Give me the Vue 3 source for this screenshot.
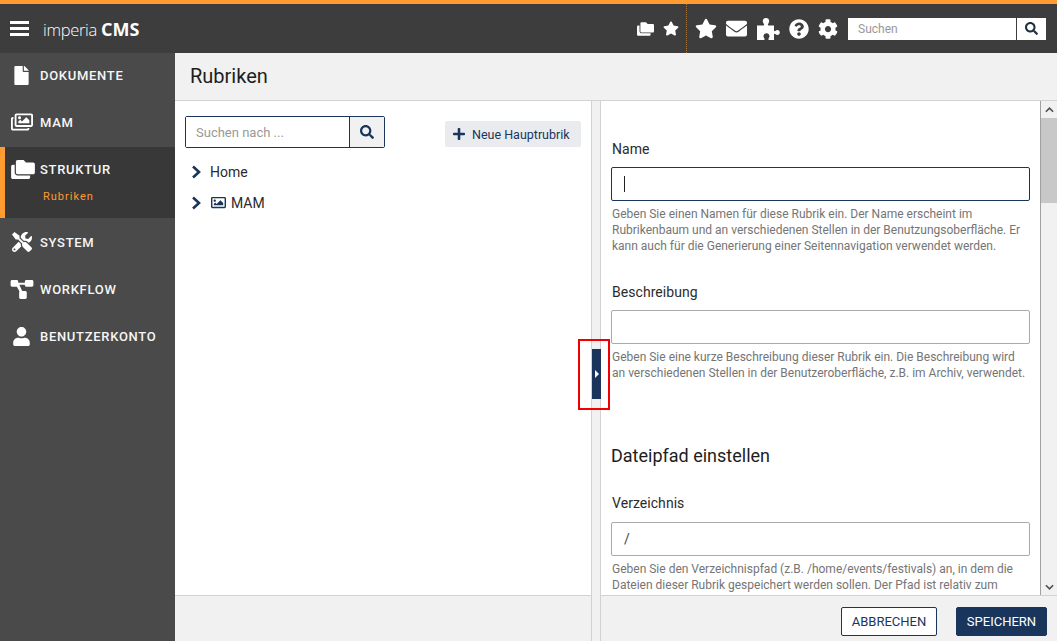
<script setup>
const icons = {
  star: { box: '0 0 576 512', d: 'M259.3 17.8L194 150.2 47.9 171.5c-26.2 3.8-36.7 36.1-17.7 54.6l105.7 103-25 145.5c-4.5 26.3 23.2 46 46.4 33.7L288 439.6l130.7 68.7c23.2 12.2 50.9-7.4 46.4-33.7l-25-145.5 105.7-103c19-18.5 8.5-50.8-17.7-54.6L382 150.2 316.7 17.8c-11.7-23.6-45.6-23.9-57.4 0z' },
  envelope: { box: '0 0 512 512', d: 'M502.3 190.8c3.9-3.1 9.7-.2 9.7 4.7V400c0 26.5-21.5 48-48 48H48c-26.5 0-48-21.5-48-48V195.6c0-5 5.7-7.8 9.7-4.7 22.4 17.4 52.1 39.5 154.1 113.6 21.1 15.4 56.7 47.8 92.2 47.6 35.7.3 72-32.8 92.3-47.6 102-74.1 131.6-96.3 154-113.7zM256 320c23.2.4 56.6-29.2 73.4-41.4 132.7-96.3 142.8-104.7 173.4-128.7 5.8-4.5 9.2-11.5 9.2-18.9v-19c0-26.5-21.5-48-48-48H48C21.5 64 0 85.5 0 112v19c0 7.4 3.4 14.3 9.2 18.9 30.6 23.9 40.7 32.4 173.4 128.7 16.8 12.2 50.2 41.8 73.4 41.4z' },
  puzzle: { box: '0 0 24 24', d: 'M1 8.5h6.2c.9 0 1.2-.6.8-1.3C7.3 6 6.8 5.2 6.8 4 6.8 2.200 8.200 1 10 1s3.200 1.200 3.200 3c0 1.200-.5 2-1.200 3.200-.4.7-.1 1.300.8 1.300H18v4.700c0 .9.600 1.200 1.300.8.8-.5 1.400-.9 2.200-.9 1.300 0 2.300 1 2.300 2.400s-1 2.400-2.300 2.400c-.8 0-1.400-.4-2.200-.9-.7-.4-1.300-.1-1.300.8V23h-4.700c-.9 0-1.200-.6-.8-1.300.5-.9 1-1.600 1-2.700 0-1.700-1.300-2.800-3-2.800s-3 1.100-3 2.800c0 1.100.5 1.800 1 2.700.4.700.1 1.300-.8 1.300H1z' },
  question: { box: '0 0 512 512', d: 'M504 256c0 136.997-111.043 248-248 248S8 392.997 8 256C8 119.083 119.043 8 256 8s248 111.083 248 248zM262.655 90c-54.497 0-89.255 22.957-116.549 63.758-3.536 5.286-2.353 12.415 2.715 16.258l34.699 26.31c5.205 3.947 12.621 3.008 16.665-2.122 17.864-22.658 30.113-35.797 57.303-35.797 20.429 0 45.698 13.148 45.698 32.958 0 14.976-12.363 22.667-32.534 33.976C247.128 238.528 216 254.941 216 296v4c0 6.627 5.373 12 12 12h56c6.627 0 12-5.373 12-12v-1.333c0-28.462 83.186-29.647 83.186-106.667 0-58.002-60.165-102-116.531-102zM256 338c-25.365 0-46 20.635-46 46 0 25.364 20.635 46 46 46s46-20.636 46-46c0-25.365-20.635-46-46-46z' },
  cog: { box: '0 0 512 512', d: 'M487.4 315.7l-42.6-24.6c4.3-23.2 4.3-47 0-70.2l42.6-24.6c4.9-2.8 7.1-8.6 5.5-14-11.1-35.6-30-67.8-54.7-94.6-3.8-4.1-10-5.1-14.8-2.3L380.8 110c-17.9-15.4-38.5-27.3-60.8-35.1V25.8c0-5.6-3.9-10.5-9.4-11.7-36.7-8.2-74.3-7.8-109.2 0-5.5 1.2-9.4 6.1-9.4 11.7V75c-22.2 7.9-42.8 19.8-60.8 35.1L88.7 85.5c-4.9-2.8-11-1.9-14.8 2.3-24.7 26.7-43.6 58.9-54.7 94.6-1.7 5.4.6 11.2 5.5 14L67.3 221c-4.3 23.2-4.3 47 0 70.2l-42.6 24.6c-4.9 2.8-7.1 8.6-5.5 14 11.1 35.6 30 67.8 54.7 94.6 3.8 4.1 10 5.1 14.8 2.3l42.6-24.6c17.9 15.4 38.5 27.3 60.8 35.1v49.2c0 5.6 3.9 10.5 9.4 11.7 36.7 8.2 74.3 7.8 109.2 0 5.5-1.2 9.4-6.1 9.4-11.7v-49.2c22.2-7.9 42.8-19.8 60.8-35.1l42.6 24.6c4.9 2.8 11 1.9 14.8-2.3 24.7-26.7 43.6-58.9 54.7-94.6 1.5-5.5-.7-11.3-5.6-14.1zM256 336c-44.1 0-80-35.9-80-80s35.9-80 80-80 80 35.9 80 80-35.9 80-80 80z' },
  search: { box: '0 0 512 512', d: 'M505 442.7L405.3 343c-4.5-4.5-10.6-7-17-7H372c27.6-35.3 44-79.7 44-128C416 93.1 322.9 0 208 0S0 93.1 0 208s93.1 208 208 208c48.3 0 92.7-16.4 128-44v16.3c0 6.4 2.5 12.5 7 17l99.7 99.7c9.4 9.4 24.6 9.4 33.9 0l28.3-28.3c9.4-9.4 9.4-24.6.1-34zM208 336c-70.7 0-128-57.2-128-128 0-70.7 57.2-128 128-128 70.7 0 128 57.2 128 128 0 70.7-57.2 128-128 128z' },
  user: { box: '0 0 448 512', d: 'M224 256c70.7 0 128-57.3 128-128S294.7 0 224 0 96 57.3 96 128s57.3 128 128 128zm89.6 32h-16.7c-22.2 10.2-46.9 16-72.9 16s-50.6-5.8-72.9-16h-16.7C60.2 288 0 348.2 0 422.4V464c0 26.5 21.5 48 48 48h352c26.500 0 48-21.500 48-48v-41.600c0-74.200-60.200-134.400-134.400-134.400z' },
  file: { box: '0 0 384 512', d: 'M224 136V0H24C10.700 0 0 10.700 0 24v464c0 13.300 10.700 24 24 24h336c13.300 0 24-10.700 24-24V160H248c-13.200 0-24-10.800-24-24zm160-14.100v6.100H256V0h6.100c6.400 0 12.500 2.500 17 7l97.900 98c4.500 4.500 7 10.600 7 16.900z' },
  images: { box: '0 0 576 512', d: 'M480 416v16c0 26.510-21.490 48-48 48H48c-26.510 0-48-21.490-48-48V176c0-26.510 21.490-48 48-48h16v48H54a6 6 0 0 0-6 6v244a6 6 0 0 0 6 6h372a6 6 0 0 0 6-6v-10h48zm42-336H150a6 6 0 0 0-6 6v244a6 6 0 0 0 6 6h372a6 6 0 0 0 6-6V86a6 6 0 0 0-6-6zm6-48c26.510 0 48 21.490 48 48v256c0 26.510-21.490 48-48 48H144c-26.510 0-48-21.490-48-48V80c0-26.510 21.490-48 48-48h384zM264 144c0 22.091-17.909 40-40 40s-40-17.909-40-40 17.909-40 40-40 40 17.909 40 40zm-72 96l39.515-39.515c4.686-4.686 12.284-4.686 16.971 0L288 240l103.515-103.515c4.686-4.686 12.284-4.686 16.971 0L480 208v80H192v-48z' },
  folders: { box: '0 0 640 512', d: 'M96 336V128H48c-26.500 0-48 21.500-48 48v288c0 26.500 21.500 48 48 48h416c26.500 0 48-21.500 48-48v-48H176c-44.100 0-80-35.900-80-80zM592 64H400L336 0H176c-26.500 0-48 21.500-48 48v288c0 26.500 21.500 48 48 48h416c26.500 0 48-21.500 48-48V112c0-26.500-21.500-48-48-48z' },
  tools: { box: '0 0 512 512', d: 'M501.100 395.700L384 278.600c-23.100-23.100-57.600-27.600-85.400-13.900L192 158.100V96L64 0 0 64l96 128h62.100l106.600 106.600c-13.600 27.800-9.200 62.300 13.900 85.400l117.100 117.100c14.600 14.600 38.200 14.600 52.700 0l52.700-52.700c14.500-14.600 14.500-38.200 0-52.700zM331.700 225c28.300 0 54.900 11 74.900 31l19.400 19.400c15.800-6.900 30.800-16.500 43.800-29.500 37.100-37.100 49.700-89.300 37.900-136.700-2.200-9-13.500-12.100-20.100-5.500l-74.400 74.400-67.900-11.300L334 98.900l74.400-74.400c6.600-6.600 3.400-17.900-5.700-20.200-47.400-11.700-99.600.9-136.600 37.900-28.500 28.500-41.900 66.100-41.200 103.600l82.100 82.100c8.100-1.900 16.500-2.900 24.700-2.900zm-103.900 82l-56.700-56.700L18.700 402.800c-25 25-25 65.500 0 90.500s65.500 25 90.500 0l123.600-123.600c-7.600-19.900-9.900-41.600-5-62.700zM64 472c-13.200 0-24-10.800-24-24 0-13.300 10.700-24 24-24s24 10.700 24 24c0 13.200-10.700 24-24 24z' },
  workflow: { box: '0 0 24 20', d: 'M0 1.500C0 .7.700 0 1.500 0h5C7.300 0 8 .7 8 1.500V3h7V1.500c0-.8.700-1.500 1.500-1.500h6c.8 0 1.500.7 1.500 1.500v4c0 .8-.7 1.500-1.500 1.500h-6c-.8 0-1.500-.7-1.500-1.500V5H9.200l3 6.500h3.300c.8 0 1.500.7 1.500 1.500v5.500c0 .8-.7 1.500-1.500 1.500h-5C9.700 20 9 19.300 9 18.500V13c0-.4.200-.8.400-1L6.600 7H1.500C.7 7 0 6.300 0 5.500z' },
  image: { box: '0 0 512 512', d: 'M464 64H48C21.490 64 0 85.490 0 112v288c0 26.510 21.490 48 48 48h416c26.510 0 48-21.490 48-48V112c0-26.510-21.490-48-48-48zm-6 336H54a6 6 0 0 1-6-6V118a6 6 0 0 1 6-6h404a6 6 0 0 1 6 6v276a6 6 0 0 1-6 6zM128 152c-22.091 0-40 17.909-40 40s17.909 40 40 40 40-17.909 40-40-17.909-40-40-40zM96 352h320v-80l-87.515-87.515c-4.686-4.686-12.284-4.686-16.971 0L192 304l-39.515-39.515c-4.686-4.686-12.284-4.686-16.971 0L96 304v48z' },
  plus: { box: '0 0 448 512', d: 'M416 208H272V64c0-17.670-14.330-32-32-32h-32c-17.670 0-32 14.330-32 32v144H32c-17.670 0-32 14.330-32 32v32c0 17.670 14.330 32 32 32h144v144c0 17.670 14.330 32 32 32h32c17.670 0 32-14.330 32-32V304h144c17.670 0 32-14.330 32-32v-32c0-17.670-14.330-32-32-32z' }
}

const menu = [
  { label: 'Dokumente', icon: 'file', w: 17, h: 19 },
  { label: 'MAM', icon: 'images', w: 22, h: 20 },
  { label: 'Struktur', icon: 'folders', w: 24, h: 19, active: true, sub: 'Rubriken' },
  { label: 'System', icon: 'tools', w: 20, h: 20 },
  { label: 'Workflow', icon: 'workflow', w: 24, h: 19 },
  { label: 'Benutzerkonto', icon: 'user', w: 17, h: 19 }
]

const topIcons = [
  { icon: 'star', w: 22, h: 21 },
  { icon: 'envelope', w: 21, h: 21 },
  { icon: 'puzzle', w: 24, h: 24 },
  { icon: 'question', w: 20, h: 20 },
  { icon: 'cog', w: 20, h: 20 }
]

const tree = [
  { label: 'Home' },
  { label: 'MAM', icon: true }
]
</script>

<template>
  <div class="app">
    <header class="topbar">
      <div class="brand">
        <div class="burger"><i></i><i></i><i></i></div>
        <span class="logo">imperia <b>CMS</b></span>
      </div>
      <div class="tools">
        <div class="quick">
          <svg class="qf" :viewBox="icons.folders.box"><path :d="icons.folders.d" /></svg>
          <svg class="qs" :viewBox="icons.star.box"><path :d="icons.star.d" /></svg>
        </div>
        <div class="main-icons">
          <svg v-for="t in topIcons" :key="t.icon" :viewBox="icons[t.icon].box" :width="t.w" :height="t.h"><path :d="icons[t.icon].d" /></svg>
        </div>
        <div class="top-search">
          <input type="text" placeholder="Suchen" />
          <button type="button">
            <svg :viewBox="icons.search.box"><path :d="icons.search.d" /></svg>
          </button>
        </div>
      </div>
    </header>

    <div class="body">
      <nav class="sidebar">
        <div v-for="m in menu" :key="m.label" class="item" :class="{ active: m.active }">
          <div class="item-row">
            <span class="item-icon">
              <svg :viewBox="icons[m.icon].box" :width="m.w" :height="m.h"><path :d="icons[m.icon].d" /></svg>
            </span>
            <span class="item-label">{{ m.label }}</span>
          </div>
          <div v-if="m.sub" class="item-sub">{{ m.sub }}</div>
        </div>
      </nav>

      <main class="content">
        <div class="title-bar"><h1>Rubriken</h1></div>
        <div class="panes">
          <section class="left">
            <div class="left-main">
              <div class="left-top">
                <div class="tree-search">
                  <input type="text" placeholder="Suchen nach ..." />
                  <button type="button">
                    <svg :viewBox="icons.search.box"><path :d="icons.search.d" /></svg>
                  </button>
                </div>
                <button type="button" class="add-btn">
                  <svg :viewBox="icons.plus.box"><path :d="icons.plus.d" /></svg>
                  Neue Hauptrubrik
                </button>
              </div>
              <ul class="tree">
                <li v-for="n in tree" :key="n.label">
                  <svg class="chev" viewBox="0 0 10 14"><polyline points="2,1.500 8,7 2,12.500" /></svg>
                  <svg v-if="n.icon" class="node-icon" :viewBox="icons.image.box"><path :d="icons.image.d" /></svg>
                  <span>{{ n.label }}</span>
                </li>
              </ul>
            </div>
            <div class="left-foot"></div>
          </section>

          <div class="splitter">
            <div class="handle"><i></i></div>
            <div class="marker"></div>
          </div>

          <section class="right">
            <div class="right-scroll">
              <form class="form" @submit.prevent>
                <label>Name</label>
                <div class="fake-input"><span class="caret"></span></div>
                <p class="help">Geben Sie einen Namen für diese Rubrik ein. Der Name erscheint im Rubrikenbaum und an verschiedenen Stellen in der Benutzungsoberfläche. Er kann auch für die Generierung einer Seitennavigation verwendet werden.</p>

                <label>Beschreibung</label>
                <input type="text" class="plain" />
                <p class="help">Geben Sie eine kurze Beschreibung dieser Rubrik ein. Die Beschreibung wird an verschiedenen Stellen in der Benutzeroberfläche, z.B. im Archiv, verwendet.</p>

                <h2>Dateipfad einstellen</h2>

                <label class="path">Verzeichnis</label>
                <input type="text" class="plain" value="/" />
                <p class="help">Geben Sie den Verzeichnispfad (z.B. /home/events/festivals) an, in dem die Dateien dieser Rubrik gespeichert werden sollen. Der Pfad ist relativ zum</p>
              </form>
              <div class="scrollbar">
                <div class="arrow"><svg viewBox="0 0 10 6"><polyline points="1,5 5,1 9,5" /></svg></div>
                <div class="track"><div class="thumb"></div></div>
                <div class="arrow"><svg viewBox="0 0 10 6"><polyline points="1,1 5,5 9,1" /></svg></div>
              </div>
            </div>
            <div class="right-foot">
              <button type="button" class="cancel">ABBRECHEN</button>
              <button type="button" class="save">SPEICHERN</button>
            </div>
          </section>
        </div>
      </main>
    </div>
  </div>
</template>

<style>
html, body {
  margin: 0;
  height: 100%;
  overflow: hidden;
}
</style>

<style scoped>
.app {
  height: 641px;
  display: flex;
  flex-direction: column;
  font-family: Roboto, "Liberation Sans", sans-serif;
  color: #222;
}
svg {
  display: block;
  fill: currentColor;
}
button, input {
  font-family: inherit;
  box-sizing: border-box;
}

.topbar {
  height: 53px;
  flex: none;
  box-sizing: border-box;
  border-top: 4px solid #ff9b31;
  background: #3d3d3d;
  display: flex;
  justify-content: space-between;
  align-items: center;
  color: #fff;
}
.brand {
  display: flex;
  align-items: center;
  padding-left: 10px;
}
.burger {
  width: 19px;
  display: flex;
  flex-direction: column;
  gap: 3px;
}
.burger i {
  display: block;
  height: 3px;
  background: #fff;
}
.logo {
  margin-left: 14px;
  font-family: "Open Sans", sans-serif;
  font-size: 16.500px;
  font-weight: 300;
  letter-spacing: -0.3px;
  color: #fff;
}
.logo b {
  font-weight: 700;
  font-size: 18px;
  letter-spacing: 0;
  color: #fff;
}
.tools {
  display: flex;
  align-items: center;
  height: 100%;
  padding-right: 11px;
}
.quick {
  display: flex;
  align-items: center;
  gap: 9px;
  height: 100%;
  padding-right: 7px;
  border-right: 1px dotted #a87a45;
}
.qf {
  width: 17px;
  height: 14px;
}
.qs {
  width: 16px;
  height: 15px;
}
.main-icons {
  display: flex;
  align-items: center;
  gap: 9px;
  margin-left: 8px;
}
.top-search {
  display: flex;
  margin-left: 10px;
  height: 22px;
}
.top-search input {
  width: 168px;
  height: 22px;
  border: 0;
  padding: 0 10px;
  font-size: 12px;
  background: #fff;
  outline: none;
}
.top-search input::placeholder {
  color: #999;
}
.top-search button {
  width: 29px;
  height: 22px;
  margin-left: 1px;
  border: 0;
  padding: 0;
  background: #fff;
  color: #1f2f40;
  display: flex;
  align-items: center;
  justify-content: center;
}
.top-search svg {
  width: 13px;
  height: 13px;
}

.body {
  flex: 1;
  min-height: 0;
  display: flex;
}
.sidebar {
  width: 175px;
  flex: none;
  background: #4a4a4a;
  color: #fff;
}
.item {
  height: 47px;
  box-sizing: border-box;
  padding-top: 11px;
}
.item.active {
  height: 71px;
  margin-bottom: 2px;
  background: #383838;
  border-left: 5px solid #ff9b31;
}
.item-row {
  display: flex;
  align-items: center;
  height: 22px;
}
.item-icon {
  width: 40px;
  flex: none;
  display: flex;
  justify-content: center;
  padding-left: 3px;
  box-sizing: border-box;
}
.active .item-icon {
  width: 35px;
  padding-left: 0;
}
.item-label {
  font-size: 13px;
  font-weight: 500;
  letter-spacing: 0.700px;
  text-transform: uppercase;
  color: #f6f6f6;
}
.item-sub {
  margin: 10px 0 0 38px;
  font-size: 11px;
  font-weight: 400;
  letter-spacing: 1px;
  color: #ff9b31;
}

.content {
  flex: 1;
  min-width: 0;
  display: flex;
  flex-direction: column;
}
.title-bar {
  height: 48px;
  flex: none;
  box-sizing: border-box;
  background: #f1f1f1;
  border-bottom: 1px solid #d2d2d2;
  padding-left: 15px;
  display: flex;
  align-items: center;
}
h1 {
  margin: 0 0 1px;
  font-size: 20px;
  font-weight: 400;
  color: #1d1d1d;
}
.panes {
  flex: 1;
  min-height: 0;
  display: flex;
}
.left {
  width: 416px;
  flex: none;
  display: flex;
  flex-direction: column;
}
.left-main {
  flex: 1;
}
.left-top {
  display: flex;
  justify-content: space-between;
  align-items: flex-start;
  padding: 15px 10px 0;
}
.tree-search {
  display: flex;
  width: 200px;
  height: 32px;
  box-sizing: border-box;
  border: 1px solid #1a355b;
  border-radius: 2px;
}
.tree-search input {
  flex: 1;
  min-width: 0;
  border: 0;
  padding: 0 10px;
  font-size: 13px;
  outline: none;
  background: #fff;
}
.tree-search input::placeholder {
  color: #999;
}
.tree-search button {
  width: 35px;
  border: 0;
  border-left: 1px solid #1a355b;
  padding: 0;
  background: #f1f1f1;
  color: #1a355b;
  display: flex;
  align-items: center;
  justify-content: center;
}
.tree-search svg {
  width: 14px;
  height: 14px;
}
.add-btn {
  margin-top: 5px;
  height: 26px;
  width: 136px;
  border: 0;
  border-radius: 2px;
  padding: 0 0 0 8px;
  background: #e9ebef;
  color: #1a355b;
  font-size: 12.500px;
  display: flex;
  align-items: center;
  gap: 7px;
}
.add-btn svg {
  width: 12px;
  height: 14px;
}
.tree {
  list-style: none;
  margin: 8px 0 0;
  padding: 0 0 0 16px;
}
.tree li {
  height: 31px;
  display: flex;
  align-items: center;
  font-size: 14px;
  color: #2b2b2b;
}
.chev {
  width: 10px;
  height: 14px;
  margin-right: 9px;
  fill: none;
  stroke: #1a355b;
  stroke-width: 2.600;
}
.node-icon {
  width: 15px;
  height: 15px;
  margin: 0 5px 0 1px;
  color: #1a355b;
}
.left-foot {
  height: 46px;
  flex: none;
  box-sizing: border-box;
  background: #f1f1f1;
  border-top: 1px solid #d2d2d2;
}

.splitter {
  width: 10px;
  flex: none;
  box-sizing: border-box;
  background: #f1f1f1;
  border-left: 1px solid #d2d2d2;
  border-right: 1px solid #d2d2d2;
  position: relative;
}
.handle {
  position: absolute;
  left: 0;
  top: 248px;
  width: 9px;
  height: 50px;
  background: #1a355b;
  display: flex;
  align-items: center;
  justify-content: center;
}
.handle i {
  display: block;
  width: 0;
  height: 0;
  border-left: 4px solid #fff;
  border-top: 4px solid transparent;
  border-bottom: 4px solid transparent;
}
.marker {
  position: absolute;
  left: -14px;
  top: 238px;
  width: 32px;
  height: 71px;
  box-sizing: border-box;
  border: 2px solid #f00000;
}
.right {
  flex: 1;
  min-width: 0;
  display: flex;
  flex-direction: column;
}
.right-scroll {
  flex: 1;
  min-height: 0;
  display: flex;
  overflow: hidden;
}
.form {
  flex: 1;
  min-width: 0;
  padding: 38px 10px 0;
  display: flex;
  flex-direction: column;
  overflow: hidden;
}
label {
  font-size: 14px;
  line-height: 20px;
  letter-spacing: 0.05px;
  color: #2b2b2b;
  margin: 0 0 8px 1px;
}
label.path {
  margin-bottom: 9px;
}
.fake-input, .plain {
  flex: none;
  height: 34px;
  width: 100%;
  box-sizing: border-box;
  border: 1px solid #aaa;
  border-radius: 2px;
  background: #fff;
}
.fake-input {
  border-color: #1a355b;
  display: flex;
  align-items: center;
  padding-left: 12px;
}
.caret {
  display: block;
  width: 1px;
  height: 16px;
  background: #222;
}
.plain {
  padding: 0 12px;
  font-size: 14px;
  color: #444;
  outline: none;
}
.help {
  margin: 5px 0 28px;
  padding: 0 3px 0 1px;
  font-size: 12px;
  line-height: 16px;
  color: #757575;
}
h2 {
  margin: 35px 0 25px;
  font-size: 18px;
  line-height: 24px;
  font-weight: 400;
  color: #1d1d1d;
}
.scrollbar {
  width: 17px;
  flex: none;
  box-sizing: border-box;
  border-left: 1px solid #a0a0a0;
  background: #f1f1f1;
  display: flex;
  flex-direction: column;
}
.arrow {
  height: 17px;
  flex: none;
  display: flex;
  align-items: center;
  justify-content: center;
}
.arrow svg {
  width: 9px;
  height: 6px;
  fill: none;
  stroke: #505050;
  stroke-width: 1.800;
}
.track {
  flex: 1;
}
.thumb {
  height: 85px;
  background: #c8c8c8;
}
.right-foot {
  height: 46px;
  flex: none;
  box-sizing: border-box;
  background: #f1f1f1;
  border-top: 1px solid #d2d2d2;
  display: flex;
  justify-content: flex-end;
  align-items: flex-start;
  gap: 19px;
  padding: 11px 10px 0 0;
}
.right-foot button {
  height: 29px;
  box-sizing: border-box;
  border-radius: 2px;
  font-size: 13px;
  padding: 0;
}
.cancel {
  width: 96px;
  background: #fff;
  border: 1px solid #1a355b;
  color: #1a355b;
}
.save {
  width: 91px;
  background: #1a355b;
  border: 1px solid #1a355b;
  color: #fff;
}
</style>
